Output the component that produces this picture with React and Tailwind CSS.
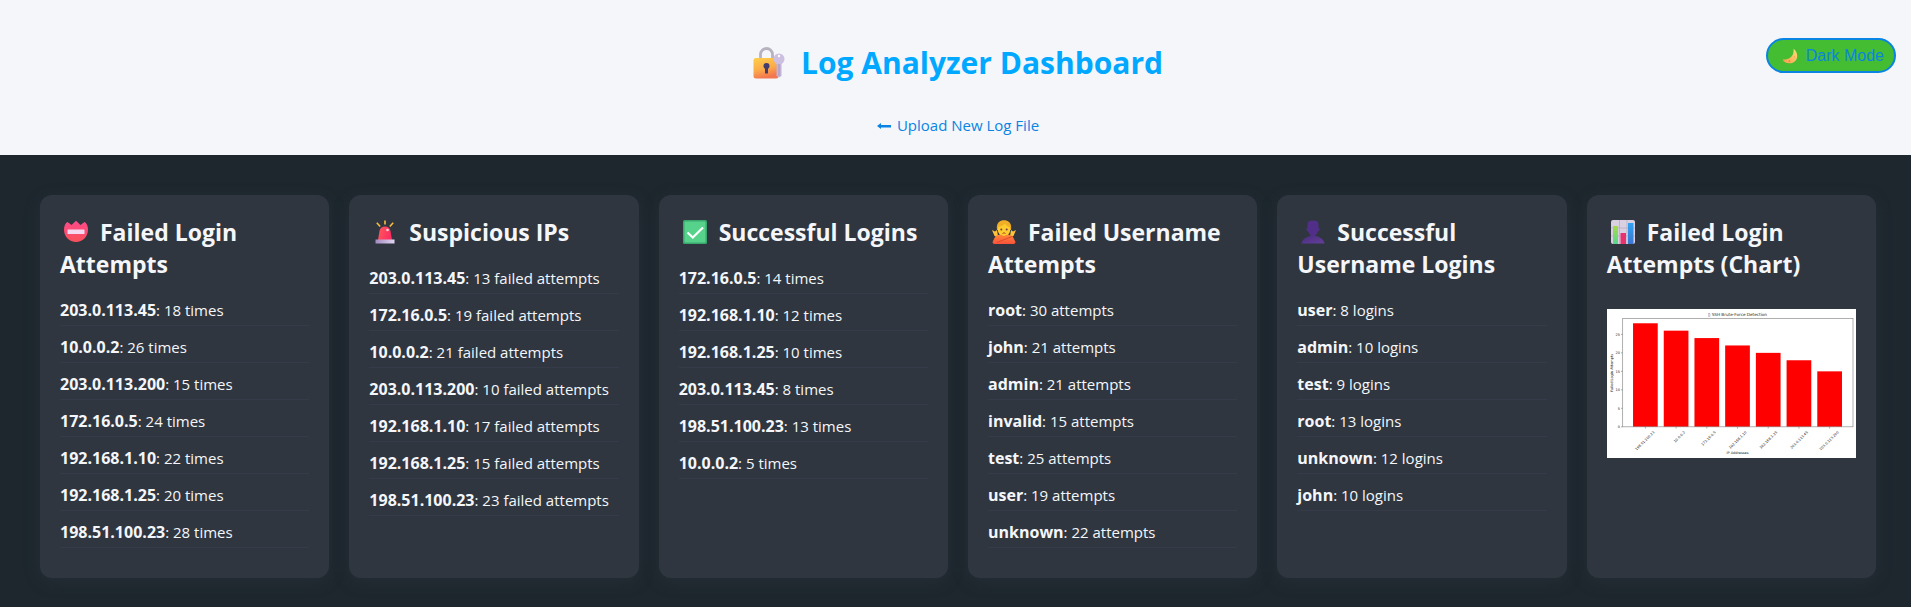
const iconClass = "ml-1 mr-3 inline-block size-6 align-[-3px]";

function LockIcon() {
  return (
    <svg viewBox="0 0 32 32" className="size-8 shrink-0" aria-hidden="true">
      <defs>
        <linearGradient id="lockBody" x1="0" y1="0" x2="0.3" y2="1">
          <stop offset="0" stopColor="#ffcf4a" />
          <stop offset="0.6" stopColor="#fbab4a" />
          <stop offset="1" stopColor="#f3764f" />
        </linearGradient>
      </defs>
      <path d="M7.500 13V7.500a6 6 0 0 1 12 0V13" fill="none" stroke="#b8b2c0" strokeWidth="2.800" />
      <rect x="0.500" y="11" width="25" height="20.500" rx="2.500" fill="url(#lockBody)" />
      <circle cx="13.500" cy="19" r="3" fill="#433b6b" />
      <path d="M12 20h3v6.500h-3z" fill="#433b6b" />
      <path d="M23.500 16h5v13l-2.500 1.500-2.500-1.500z" fill="#c4b4d6" />
      <circle cx="26" cy="12" r="5.500" fill="#cdbfe0" />
      <circle cx="26" cy="9" r="1.200" fill="#fff" />
      <path d="M26 17v12" stroke="#a995bd" strokeWidth="1" />
    </svg>
  );
}

function MoonIcon() {
  return (
    <svg viewBox="0 0 16 16" className="size-4" aria-hidden="true">
      <defs>
        <linearGradient id="moon" x1="1" y1="0" x2="0" y2="1">
          <stop offset="0" stopColor="#ffe07a" />
          <stop offset="1" stopColor="#f79a4b" />
        </linearGradient>
      </defs>
      <path d="M11.500 0.800C18 6 15.500 15 7.500 15.300 4 15.400 1.500 13.500 0.600 11.500 6 12 12.500 9 11.500 0.800Z" fill="url(#moon)" />
      <circle cx="12.500" cy="9" r="0.900" fill="#f2b257" />
      <circle cx="7.500" cy="13" r="0.900" fill="#e88b42" />
    </svg>
  );
}

function BadgeIcon() {
  return (
    <svg viewBox="0 0 24 24" className={iconClass} aria-hidden="true">
      <defs>
        <linearGradient id="badge" x1="0" y1="0" x2="0" y2="1">
          <stop offset="0" stopColor="#ff4a8b" />
          <stop offset="1" stopColor="#f8505a" />
        </linearGradient>
      </defs>
      <path d="M3.500 2 7.500 5 12 0.800 16.500 5 20.500 2C22.500 3 24 6 24 9.500 24 17 18.500 22 12 22S0 17 0 9.500C0 6 1.500 3 3.500 2Z" fill="url(#badge)" />
      <rect x="3.500" y="9.500" width="17" height="4.500" rx="0.500" fill="#f5d9f2" />
    </svg>
  );
}

function SirenIcon() {
  return (
    <svg viewBox="0 0 24 24" className={iconClass} aria-hidden="true">
      <defs>
        <linearGradient id="siren" x1="0" y1="0" x2="1" y2="0.300">
          <stop offset="0" stopColor="#ff5a5a" />
          <stop offset="1" stopColor="#fb2f62" />
        </linearGradient>
        <linearGradient id="sirenBase" x1="0" y1="0" x2="1" y2="0">
          <stop offset="0" stopColor="#a28ac0" />
          <stop offset="1" stopColor="#e2d5f0" />
        </linearGradient>
      </defs>
      <path d="M12 0.500v4M3.800 2.800l3.400 3.700M20.200 2.800l-3.400 3.700" stroke="#f6bf3f" strokeWidth="1.600" />
      <path d="M5 20 6.500 11C7 8 9 6.500 12 6.500S17 8 17.500 11L19 20Z" fill="url(#siren)" />
      <circle cx="14.500" cy="10" r="1.300" fill="#ffd2da" />
      <rect x="2.500" y="19.500" width="19" height="4" fill="url(#sirenBase)" />
    </svg>
  );
}

function CheckIcon() {
  return (
    <svg viewBox="0 0 24 24" className={iconClass} aria-hidden="true">
      <rect width="24" height="24" rx="1.500" fill="#3aa76d" />
      <rect x="1.500" y="1.500" width="21" height="21" rx="1" fill="#56d28b" />
      <path d="M4.500 12.500 9.800 17.500 20 7.500" fill="none" stroke="#fff" strokeWidth="2.200" />
    </svg>
  );
}

function GestureIcon() {
  return (
    <svg viewBox="0 0 24 24" className={iconClass} aria-hidden="true">
      <defs>
        <linearGradient id="arms" x1="0" y1="0" x2="0" y2="1">
          <stop offset="0" stopColor="#ff8a35" />
          <stop offset="1" stopColor="#f9503c" />
        </linearGradient>
      </defs>
      <path d="M0 10 3 11.500 5 10 6 16 2.500 16Z" fill="#ffc23a" />
      <path d="M24 10 21 11.500 19 10 18 16 21.500 16Z" fill="#ffc23a" />
      <path d="M5 10C4 3 7 0.500 12 0.500S20 3 19 10Z" fill="#e9a51e" />
      <ellipse cx="12" cy="9.500" rx="6.300" ry="6.800" fill="#ffcb2e" />
      <path d="M5.500 7C9 6.500 12 5 13 3.500 14 5.500 16 7 18.500 7 18 2 15.500 0.500 12 0.500S6 2 5.500 7Z" fill="#efaf26" />
      <circle cx="9.300" cy="9.500" r="1" fill="#6b4050" />
      <circle cx="14.700" cy="9.500" r="1" fill="#6b4050" />
      <path d="M10.500 13.500q1.500-1.500 3 0" fill="none" stroke="#a34a2a" strokeWidth="1" />
      <path d="M3.500 16 8 14.500 12 16 16 14.500 20.500 16 23.500 22Q23.500 24.500 20 24H4Q0.500 24.500 0.500 22Z" fill="url(#arms)" />
      <path d="M5 22.500 20 16.500" stroke="#d9412f" strokeWidth="0.800" />
    </svg>
  );
}

function PersonIcon() {
  return (
    <svg viewBox="0 0 24 24" className={iconClass} aria-hidden="true">
      <defs>
        <linearGradient id="person" x1="0" y1="0" x2="1" y2="1">
          <stop offset="0" stopColor="#4a2d7e" />
          <stop offset="1" stopColor="#643f9a" />
        </linearGradient>
      </defs>
      <path d="M6.500 4C6.500 1.500 8.500 0.500 12 0.500S17.500 1.500 17.500 4V8Q19 8 18.500 10 18 11.500 17 11.300 16 14 14.500 15V17H9.500V15Q8 14 7 11.300 6 11.500 5.500 10 5 8 6.500 8Z" fill="#512f88" />
      <path d="M0.500 23.500C1.500 18.500 6 16 12 16S22.500 18.500 23.500 23.500Z" fill="url(#person)" />
    </svg>
  );
}

function ChartIcon() {
  return (
    <svg viewBox="0 0 24 24" className={iconClass} aria-hidden="true">
      <defs>
        <linearGradient id="greenBar" x1="0" y1="0" x2="0" y2="1">
          <stop offset="0" stopColor="#a6dc45" />
          <stop offset="1" stopColor="#55d890" />
        </linearGradient>
        <linearGradient id="blueBar" x1="0" y1="0" x2="0" y2="1">
          <stop offset="0" stopColor="#2fa4f2" />
          <stop offset="1" stopColor="#3c76d2" />
        </linearGradient>
      </defs>
      <rect width="24" height="24" rx="2" fill="#d9d0e2" />
      <path d="M0 8h24M0 16h24M8.500 0v24M16 0v24" stroke="#b9afc4" strokeWidth="0.800" />
      <rect x="2" y="6" width="5" height="18" fill="url(#greenBar)" />
      <rect x="9.500" y="13" width="5.500" height="11" fill="#e8336f" />
      <rect x="17" y="3" width="5.500" height="21" fill="url(#blueBar)" />
    </svg>
  );
}

const attemptsByIp = [
  ["198.51.100.23", 28],
  ["10.0.0.2", 26],
  ["172.16.0.5", 24],
  ["192.168.1.10", 22],
  ["192.168.1.25", 20],
  ["203.0.113.45", 18],
  ["203.0.113.200", 15],
];

function AttemptsChart() {
  const baseline = 353;
  const scale = 11.08;
  return (
    <svg
      viewBox="0 0 747 447"
      role="img"
      aria-label="Failed login attempts by IP address"
      className="mt-[29px] block w-full bg-white font-['DejaVu_Sans',sans-serif]"
    >
      <text x="391" y="21" fontSize="12.500" textAnchor="middle" fill="#222">▯ SSH Brute-Force Detection</text>
      <text x="18" y="191" fontSize="10.500" textAnchor="middle" fill="#222" transform="rotate(-90 18 191)">Failed Login Attempts</text>
      <text x="391" y="434" fontSize="10.500" textAnchor="middle" fill="#222">IP Addresses</text>
      {[0, 5, 10, 15, 20, 25].map((tick) => (
        <g key={tick}>
          <path d={`M42 ${baseline - tick * scale}h5`} stroke="#555" strokeWidth="1.500" />
          <text x="39" y={baseline - tick * scale + 4} fontSize="10.500" textAnchor="end" fill="#222">{tick}</text>
        </g>
      ))}
      {attemptsByIp.map(([ip, count], i) => {
        const center = 115 + i * 92;
        return (
          <g key={ip}>
            <rect x={center - 37} y={baseline - count * scale} width="74" height={count * scale} fill="#f00" />
            <path d={`M${center} ${baseline}v5`} stroke="#555" strokeWidth="1.500" />
            <text x={center + 28} y="370" fontSize="10.500" textAnchor="end" fill="#222" transform={`rotate(-45 ${center + 28} 370)`}>{ip}</text>
          </g>
        );
      })}
      <rect x="47" y="28" width="690" height="325" fill="none" stroke="#888" strokeWidth="2" />
    </svg>
  );
}

const cards = [
  {
    title: "Failed Login Attempts",
    Icon: BadgeIcon,
    unit: "times",
    rows: [["203.0.113.45", 18], ["10.0.0.2", 26], ["203.0.113.200", 15], ["172.16.0.5", 24], ["192.168.1.10", 22], ["192.168.1.25", 20], ["198.51.100.23", 28]],
  },
  {
    title: "Suspicious IPs",
    Icon: SirenIcon,
    unit: "failed attempts",
    rows: [["203.0.113.45", 13], ["172.16.0.5", 19], ["10.0.0.2", 21], ["203.0.113.200", 10], ["192.168.1.10", 17], ["192.168.1.25", 15], ["198.51.100.23", 23]],
  },
  {
    title: "Successful Logins",
    Icon: CheckIcon,
    unit: "times",
    rows: [["172.16.0.5", 14], ["192.168.1.10", 12], ["192.168.1.25", 10], ["203.0.113.45", 8], ["198.51.100.23", 13], ["10.0.0.2", 5]],
  },
  {
    title: "Failed Username Attempts",
    Icon: GestureIcon,
    unit: "attempts",
    rows: [["root", 30], ["john", 21], ["admin", 21], ["invalid", 15], ["test", 25], ["user", 19], ["unknown", 22]],
  },
  {
    title: "Successful Username Logins",
    Icon: PersonIcon,
    unit: "logins",
    rows: [["user", 8], ["admin", 10], ["test", 9], ["root", 13], ["unknown", 12], ["john", 10]],
  },
  { title: "Failed Login Attempts (Chart)", Icon: ChartIcon },
];

function Card({ title, Icon, unit, rows }) {
  return (
    <section className="rounded-xl bg-[#2f3640] px-5 pt-[21px] pb-5 shadow-[0_4px_15px_rgba(47,54,64,0.4)]">
      <h2 className="text-[23px] leading-8 font-bold">
        <Icon />
        {title}
      </h2>
      {rows ? (
        <ul className="mt-[9px] mb-2.5">
          {rows.map(([name, count]) => (
            <li key={name} className="border-b border-[#353b48] pt-[9px] pb-[3px] text-[15px] leading-6">
              <strong className="text-base leading-none">{name}</strong>: {count} {unit}
            </li>
          ))}
        </ul>
      ) : (
        <AttemptsChart />
      )}
    </section>
  );
}

export default function App() {
  return (
    <div className="flex min-h-screen flex-col bg-[#f5f6fa] font-['Open_Sans','Noto_Sans',sans-serif] text-[#f5f6fa]">
      <header className="relative flex flex-col items-center pt-[41px] pb-[17px] pl-[5px]">
        <h1 className="flex items-center gap-4 text-[30px] leading-[44px] font-bold text-[#00a8ff]">
          <LockIcon />
          Log Analyzer Dashboard
        </h1>
        <a href="#upload" className="mt-7 flex items-center gap-1.5 text-[15px] leading-[25px] text-[#0984e3]">
          <svg viewBox="0 0 14 8" className="h-2 w-3.5" aria-hidden="true">
            <path d="M0 4 4 1v2h10v2.500H4V7Z" fill="currentColor" />
          </svg>
          Upload New Log File
        </a>
        <button
          type="button"
          className="absolute top-[38px] right-[15px] flex h-[35px] items-center gap-2 rounded-full border-2 border-[#0984e3] bg-[#44bd32] pr-2.5 pl-3.5 font-['Liberation_Sans',Arial,sans-serif] text-base text-[#0984e3]"
        >
          <MoonIcon />
          Dark Mode
        </button>
      </header>
      <main className="grid flex-1 grid-cols-1 items-start gap-5 bg-[#1e272e] pt-10 pr-[35px] pb-[29px] pl-10 sm:grid-cols-2 lg:grid-cols-6 lg:items-stretch">
        {cards.map((card) => (
          <Card key={card.title} {...card} />
        ))}
      </main>
    </div>
  );
}
